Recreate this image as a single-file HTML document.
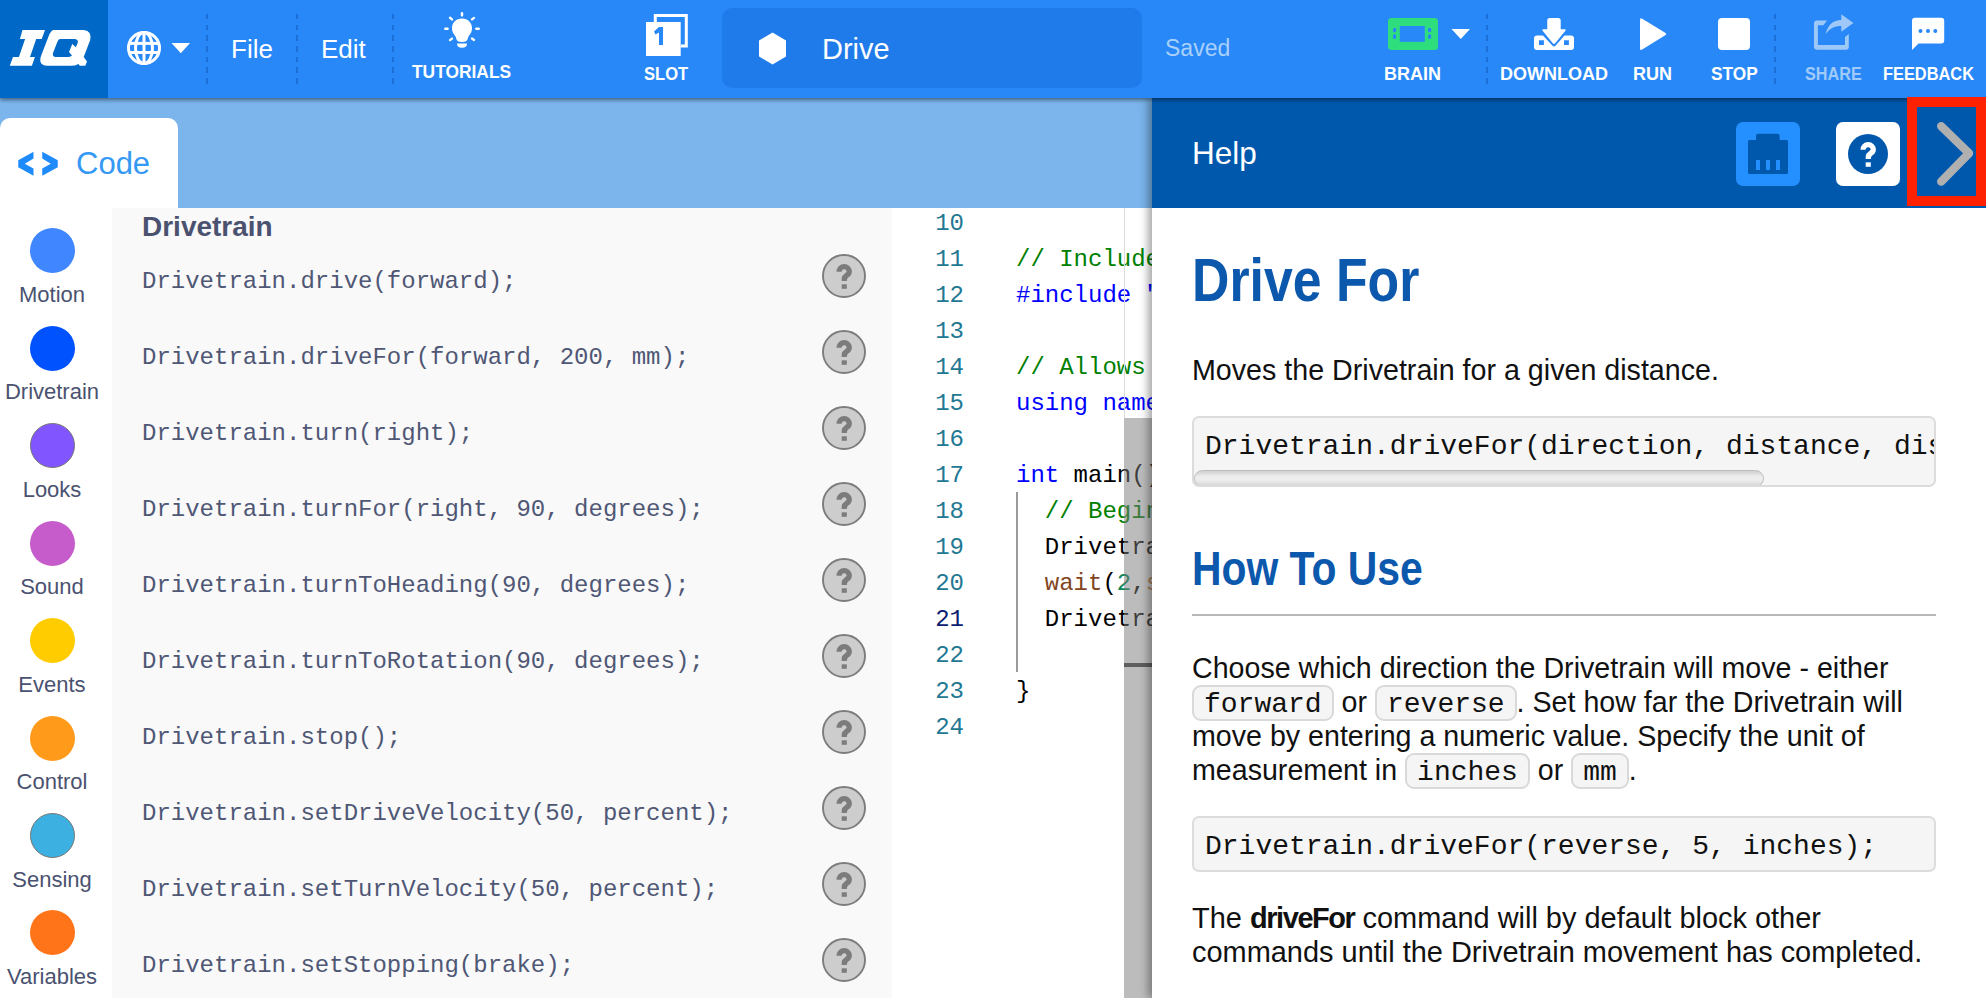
<!DOCTYPE html>
<html><head><meta charset="utf-8">
<style>
*{box-sizing:border-box;margin:0;padding:0}
html,body{width:1986px;height:998px;overflow:hidden;background:#fff;font-family:"Liberation Sans",sans-serif}
.abs{position:absolute}
#hdr{left:0;top:0;width:1986px;height:98px;background:#2888f8;z-index:5;box-shadow:0 2px 4px rgba(0,0,0,0.45)}
#logo{left:0;top:0;width:108px;height:98px;background:#0069c7}
.sep{top:14px;height:70px;width:2px;background:repeating-linear-gradient(to bottom,#1b6fd9 0,#1b6fd9 5.5px,transparent 5.5px,transparent 10.67px)}
.menu{color:#fff;font-size:26px;white-space:nowrap}
.lbl{color:#fff;font-size:18px;font-weight:700;white-space:nowrap;transform-origin:0 0}
#sub{left:0;top:98px;width:1152px;height:110px;background:#7bb5ec}
#tab{left:0;top:118px;width:178px;height:90px;background:#fff;border-radius:10px 10px 0 0}
#side{left:0;top:208px;width:112px;height:790px;background:#fff}
.cat{width:45px;height:45px;border-radius:50%;left:29.5px}
.catl{width:104px;left:0;text-align:center;color:#4a5270;font-size:22px;white-space:nowrap}
#panel{left:112px;top:208px;width:780px;height:790px;background:#f9f9fa}
.cl{left:142px;font-family:"Liberation Mono",monospace;font-size:24px;color:#4f5775;white-space:pre}
.q{width:44px;height:44px}.q svg{display:block}
#editor{left:892px;top:208px;width:260px;height:790px;background:#fff;overflow:hidden}
.ln{left:0;width:72px;text-align:right;font-family:"Liberation Mono",monospace;font-size:24px;color:#237893;white-space:pre}
.cd{font-family:"Liberation Mono",monospace;font-size:24px;color:#000;white-space:pre}
#help{left:1152px;top:98px;width:834px;height:900px;background:#fff;box-shadow:-4px 0 8px rgba(0,0,0,0.35);z-index:3}
#hh{left:0;top:0;width:834px;height:110px;background:#0058ad}
.ht{color:#0b58ad;font-weight:700;white-space:nowrap;transform-origin:0 0}
.p{left:40px;width:760px;font-size:28.62px;line-height:34px;color:#111}
.ic{display:inline-block;font-family:"Liberation Mono",monospace;font-size:28px;line-height:29px;padding:3px 10px 0;background:#f5f5f5;border:2px solid #d9d9d9;border-radius:9px;vertical-align:0}
.cb{left:40px;width:744px;background:#f5f5f5;border:2px solid #dcdcdc;border-radius:7px;overflow:hidden;font-family:"Liberation Mono",monospace;font-size:28px;color:#111;white-space:pre}
</style></head><body>

<div id="sub" class="abs"></div>
<div id="tab" class="abs">
 <svg class="abs" style="left:0;top:0" width="70" height="70" viewBox="0 118 70 70">
  <path fill="#1f8bfa" d="M33.5 151.75 L33.5 158.5 L24.75 163.75 L33.5 168.5 L33.5 175.75 L18.25 167.25 L18.25 160.25 Z"/>
  <path fill="#1f8bfa" d="M42.25 151.75 L42.25 158.5 L50.75 163.75 L42.25 168.5 L42.25 175.75 L57.75 167.25 L57.75 160.25 Z"/>
 </svg>
 <div class="abs" style="left:76px;top:28px;font-size:31px;color:#3399f4;white-space:nowrap">Code</div>
</div>
<div id="side" class="abs">
 <div class="abs cat" style="top:20.2px;background:#3f86ff;"></div>
 <div class="abs catl" style="top:73.7px">Motion</div>
 <div class="abs cat" style="top:117.7px;background:#0052ff;"></div>
 <div class="abs catl" style="top:171.2px">Drivetrain</div>
 <div class="abs cat" style="top:215.1px;background:#8155ff;border:1px solid #777;"></div>
 <div class="abs catl" style="top:268.6px">Looks</div>
 <div class="abs cat" style="top:312.6px;background:#c65bcb;"></div>
 <div class="abs catl" style="top:366.1px">Sound</div>
 <div class="abs cat" style="top:410.0px;background:#ffcc00;"></div>
 <div class="abs catl" style="top:463.5px">Events</div>
 <div class="abs cat" style="top:507.5px;background:#ff9a1a;"></div>
 <div class="abs catl" style="top:561.0px">Control</div>
 <div class="abs cat" style="top:605.0px;background:#3cb0e0;border:1px solid #777;"></div>
 <div class="abs catl" style="top:658.5px">Sensing</div>
 <div class="abs cat" style="top:702.4px;background:#ff7418;"></div>
 <div class="abs catl" style="top:755.9px">Variables</div>
</div>
</div>
<div id="panel" class="abs">
 <div class="abs" style="left:30px;top:3px;font-size:28px;font-weight:700;color:#4a5270;white-space:nowrap">Drivetrain</div>
 <div class="abs cl" style="left:30px;top:60px">Drivetrain.drive(forward);</div>
 <div class="abs q" style="left:710px;top:46px"><svg width="44" height="44" viewBox="0 0 44 44"><circle cx="22" cy="22" r="21" fill="#cdcdcd" stroke="#7c7c7c" stroke-width="1.9"/><path fill="#7c7c7c" d="M14.5 17.8 A7.7 7.7 0 0 1 29.9 17.7 Q29.9 21 26.5 23.3 Q24.8 24.5 24.8 26.9 L19.7 26.9 L19.7 24.2 Q19.9 21.5 22.8 19.5 Q24.7 18.3 24.7 17.2 A2.6 2.6 0 0 0 19.6 17.8 Z"/><rect x="19.7" y="30.3" width="5.1" height="4.5" fill="#7c7c7c"/></svg></div>
 <div class="abs cl" style="left:30px;top:136px">Drivetrain.driveFor(forward, 200, mm);</div>
 <div class="abs q" style="left:710px;top:122px"><svg width="44" height="44" viewBox="0 0 44 44"><circle cx="22" cy="22" r="21" fill="#cdcdcd" stroke="#7c7c7c" stroke-width="1.9"/><path fill="#7c7c7c" d="M14.5 17.8 A7.7 7.7 0 0 1 29.9 17.7 Q29.9 21 26.5 23.3 Q24.8 24.5 24.8 26.9 L19.7 26.9 L19.7 24.2 Q19.9 21.5 22.8 19.5 Q24.7 18.3 24.7 17.2 A2.6 2.6 0 0 0 19.6 17.8 Z"/><rect x="19.7" y="30.3" width="5.1" height="4.5" fill="#7c7c7c"/></svg></div>
 <div class="abs cl" style="left:30px;top:212px">Drivetrain.turn(right);</div>
 <div class="abs q" style="left:710px;top:198px"><svg width="44" height="44" viewBox="0 0 44 44"><circle cx="22" cy="22" r="21" fill="#cdcdcd" stroke="#7c7c7c" stroke-width="1.9"/><path fill="#7c7c7c" d="M14.5 17.8 A7.7 7.7 0 0 1 29.9 17.7 Q29.9 21 26.5 23.3 Q24.8 24.5 24.8 26.9 L19.7 26.9 L19.7 24.2 Q19.9 21.5 22.8 19.5 Q24.7 18.3 24.7 17.2 A2.6 2.6 0 0 0 19.6 17.8 Z"/><rect x="19.7" y="30.3" width="5.1" height="4.5" fill="#7c7c7c"/></svg></div>
 <div class="abs cl" style="left:30px;top:288px">Drivetrain.turnFor(right, 90, degrees);</div>
 <div class="abs q" style="left:710px;top:274px"><svg width="44" height="44" viewBox="0 0 44 44"><circle cx="22" cy="22" r="21" fill="#cdcdcd" stroke="#7c7c7c" stroke-width="1.9"/><path fill="#7c7c7c" d="M14.5 17.8 A7.7 7.7 0 0 1 29.9 17.7 Q29.9 21 26.5 23.3 Q24.8 24.5 24.8 26.9 L19.7 26.9 L19.7 24.2 Q19.9 21.5 22.8 19.5 Q24.7 18.3 24.7 17.2 A2.6 2.6 0 0 0 19.6 17.8 Z"/><rect x="19.7" y="30.3" width="5.1" height="4.5" fill="#7c7c7c"/></svg></div>
 <div class="abs cl" style="left:30px;top:364px">Drivetrain.turnToHeading(90, degrees);</div>
 <div class="abs q" style="left:710px;top:350px"><svg width="44" height="44" viewBox="0 0 44 44"><circle cx="22" cy="22" r="21" fill="#cdcdcd" stroke="#7c7c7c" stroke-width="1.9"/><path fill="#7c7c7c" d="M14.5 17.8 A7.7 7.7 0 0 1 29.9 17.7 Q29.9 21 26.5 23.3 Q24.8 24.5 24.8 26.9 L19.7 26.9 L19.7 24.2 Q19.9 21.5 22.8 19.5 Q24.7 18.3 24.7 17.2 A2.6 2.6 0 0 0 19.6 17.8 Z"/><rect x="19.7" y="30.3" width="5.1" height="4.5" fill="#7c7c7c"/></svg></div>
 <div class="abs cl" style="left:30px;top:440px">Drivetrain.turnToRotation(90, degrees);</div>
 <div class="abs q" style="left:710px;top:426px"><svg width="44" height="44" viewBox="0 0 44 44"><circle cx="22" cy="22" r="21" fill="#cdcdcd" stroke="#7c7c7c" stroke-width="1.9"/><path fill="#7c7c7c" d="M14.5 17.8 A7.7 7.7 0 0 1 29.9 17.7 Q29.9 21 26.5 23.3 Q24.8 24.5 24.8 26.9 L19.7 26.9 L19.7 24.2 Q19.9 21.5 22.8 19.5 Q24.7 18.3 24.7 17.2 A2.6 2.6 0 0 0 19.6 17.8 Z"/><rect x="19.7" y="30.3" width="5.1" height="4.5" fill="#7c7c7c"/></svg></div>
 <div class="abs cl" style="left:30px;top:516px">Drivetrain.stop();</div>
 <div class="abs q" style="left:710px;top:502px"><svg width="44" height="44" viewBox="0 0 44 44"><circle cx="22" cy="22" r="21" fill="#cdcdcd" stroke="#7c7c7c" stroke-width="1.9"/><path fill="#7c7c7c" d="M14.5 17.8 A7.7 7.7 0 0 1 29.9 17.7 Q29.9 21 26.5 23.3 Q24.8 24.5 24.8 26.9 L19.7 26.9 L19.7 24.2 Q19.9 21.5 22.8 19.5 Q24.7 18.3 24.7 17.2 A2.6 2.6 0 0 0 19.6 17.8 Z"/><rect x="19.7" y="30.3" width="5.1" height="4.5" fill="#7c7c7c"/></svg></div>
 <div class="abs cl" style="left:30px;top:592px">Drivetrain.setDriveVelocity(50, percent);</div>
 <div class="abs q" style="left:710px;top:578px"><svg width="44" height="44" viewBox="0 0 44 44"><circle cx="22" cy="22" r="21" fill="#cdcdcd" stroke="#7c7c7c" stroke-width="1.9"/><path fill="#7c7c7c" d="M14.5 17.8 A7.7 7.7 0 0 1 29.9 17.7 Q29.9 21 26.5 23.3 Q24.8 24.5 24.8 26.9 L19.7 26.9 L19.7 24.2 Q19.9 21.5 22.8 19.5 Q24.7 18.3 24.7 17.2 A2.6 2.6 0 0 0 19.6 17.8 Z"/><rect x="19.7" y="30.3" width="5.1" height="4.5" fill="#7c7c7c"/></svg></div>
 <div class="abs cl" style="left:30px;top:668px">Drivetrain.setTurnVelocity(50, percent);</div>
 <div class="abs q" style="left:710px;top:654px"><svg width="44" height="44" viewBox="0 0 44 44"><circle cx="22" cy="22" r="21" fill="#cdcdcd" stroke="#7c7c7c" stroke-width="1.9"/><path fill="#7c7c7c" d="M14.5 17.8 A7.7 7.7 0 0 1 29.9 17.7 Q29.9 21 26.5 23.3 Q24.8 24.5 24.8 26.9 L19.7 26.9 L19.7 24.2 Q19.9 21.5 22.8 19.5 Q24.7 18.3 24.7 17.2 A2.6 2.6 0 0 0 19.6 17.8 Z"/><rect x="19.7" y="30.3" width="5.1" height="4.5" fill="#7c7c7c"/></svg></div>
 <div class="abs cl" style="left:30px;top:744px">Drivetrain.setStopping(brake);</div>
 <div class="abs q" style="left:710px;top:730px"><svg width="44" height="44" viewBox="0 0 44 44"><circle cx="22" cy="22" r="21" fill="#cdcdcd" stroke="#7c7c7c" stroke-width="1.9"/><path fill="#7c7c7c" d="M14.5 17.8 A7.7 7.7 0 0 1 29.9 17.7 Q29.9 21 26.5 23.3 Q24.8 24.5 24.8 26.9 L19.7 26.9 L19.7 24.2 Q19.9 21.5 22.8 19.5 Q24.7 18.3 24.7 17.2 A2.6 2.6 0 0 0 19.6 17.8 Z"/><rect x="19.7" y="30.3" width="5.1" height="4.5" fill="#7c7c7c"/></svg></div>
</div>
<div id="editor" class="abs">
 <div class="abs ln" style="top:2px;color:#237893">10</div>
 <div class="abs ln" style="top:38px;color:#237893">11</div>
 <div class="abs cd" style="left:124px;top:38px"><span style="color:#008000">// Include the IQ Library</span></div>
 <div class="abs ln" style="top:74px;color:#237893">12</div>
 <div class="abs cd" style="left:124px;top:74px"><span style="color:#0000ff">#include "iq_cpp.h"</span></div>
 <div class="abs ln" style="top:110px;color:#237893">13</div>
 <div class="abs ln" style="top:146px;color:#237893">14</div>
 <div class="abs cd" style="left:124px;top:146px"><span style="color:#008000">// Allows for easier use of the VEX Library</span></div>
 <div class="abs ln" style="top:182px;color:#237893">15</div>
 <div class="abs cd" style="left:124px;top:182px"><span style="color:#0000ff">using namespace</span> vex;</div>
 <div class="abs ln" style="top:218px;color:#237893">16</div>
 <div class="abs ln" style="top:254px;color:#237893">17</div>
 <div class="abs cd" style="left:124px;top:254px"><span style="color:#0000ff">int</span> main() {</div>
 <div class="abs ln" style="top:290px;color:#237893">18</div>
 <div class="abs cd" style="left:124px;top:290px">  <span style="color:#008000">// Begin project code</span></div>
 <div class="abs ln" style="top:326px;color:#237893">19</div>
 <div class="abs cd" style="left:124px;top:326px">  Drivetrain.driveFor(forward, 200, mm);</div>
 <div class="abs ln" style="top:362px;color:#237893">20</div>
 <div class="abs cd" style="left:124px;top:362px">  <span style="color:#83461f">wait</span>(<span style="color:#098658">2</span>,<span style="color:#d07a2a">seconds</span>);</div>
 <div class="abs ln" style="top:398px;color:#0b216f">21</div>
 <div class="abs cd" style="left:124px;top:398px">  Drivetrain.turnFor(right, 90, degrees);</div>
 <div class="abs ln" style="top:434px;color:#237893">22</div>
 <div class="abs ln" style="top:470px;color:#237893">23</div>
 <div class="abs cd" style="left:124px;top:470px">}</div>
 <div class="abs ln" style="top:506px;color:#237893">24</div>
 <div class="abs" style="left:124px;top:284px;width:2px;height:180px;background:#9a9a9a"></div>
 <div class="abs" style="left:232px;top:0;width:1px;height:210px;background:#dcdcdc"></div>
 <div class="abs" style="left:232px;top:210px;width:28px;height:580px;background:rgba(121,121,121,0.5)"></div>
 <div class="abs" style="left:232px;top:455px;width:28px;height:4px;background:#5e5e5e"></div>
</div>
<div id="help" class="abs">
 <div id="hh" class="abs">
  <div class="abs" style="left:40px;top:37px;font-size:31.5px;color:#fff;white-space:nowrap">Help</div>
  <div class="abs" style="left:584px;top:24px;width:64px;height:64px;background:#2490ff;border-radius:7px">
   <svg class="abs" style="left:0;top:0" width="64" height="64" viewBox="0 0 64 64">
    <path fill="#0058ad" d="M22 11.8 L41.6 11.8 Q43.6 11.8 43.6 13.8 L43.6 18 L50.5 18 Q52 18 52 19.5 L52 50.5 Q52 52 50.5 52 L13.5 52 Q12 52 12 50.5 L12 19.5 Q12 18 13.5 18 L20 18 L20 13.8 Q20 11.8 22 11.8 Z"/>
    <rect x="20" y="38" width="4" height="10" fill="#2490ff"/><rect x="30" y="38" width="4" height="10" fill="#2490ff"/><rect x="40" y="38" width="4" height="10" fill="#2490ff"/>
   </svg>
  </div>
  <div class="abs" style="left:684px;top:24px;width:64px;height:64px;background:#fff;border-radius:7px">
   <svg class="abs" style="left:0;top:0" width="64" height="64" viewBox="0 0 64 64">
    <circle cx="32" cy="32" r="20" fill="#0058ad"/>
    <g transform="translate(10,10)"><path fill="#fff" d="M14.5 17.8 A7.7 7.7 0 0 1 29.9 17.7 Q29.9 21 26.5 23.3 Q24.8 24.5 24.8 26.9 L19.7 26.9 L19.7 24.2 Q19.9 21.5 22.8 19.5 Q24.7 18.3 24.7 17.2 A2.6 2.6 0 0 0 19.6 17.8 Z"/><rect x="19.7" y="30.3" width="5.1" height="4.5" fill="#fff"/></g>
   </svg>
  </div>
  <svg class="abs" style="left:780px;top:20px" width="46" height="70" viewBox="0 0 46 70">
   <path d="M9.2 8.3 L37 35.3 L9.2 63.6" fill="none" stroke="#b0b0b0" stroke-width="8.4" stroke-linecap="round" stroke-linejoin="round"/>
  </svg>
 </div>
 <div class="abs ht" style="left:40px;top:146px;font-size:61.5px;transform:scaleX(0.842)">Drive For</div>
 <div class="abs p" style="top:255px;font-size:28.65px">Moves the Drivetrain for a given distance.</div>
 <div class="abs cb" style="top:318px;height:71px">
  <div class="abs" style="left:11px;top:13px">Drivetrain.driveFor(direction, distance, distanceUnits);</div>
  <div class="abs" style="left:0px;top:52px;width:570px;height:17px;border-radius:9px;background:linear-gradient(#d0d0d0,#ececec 35%,#eeeeee 60%,#d4d4d4);border:1px solid #bdbdbd"></div>
 </div>
 <div class="abs ht" style="left:40px;top:443px;font-size:47.5px;transform:scaleX(0.86)">How To Use</div>
 <div class="abs" style="left:40px;top:516px;width:744px;height:2px;background:#b8b8b8"></div>
 <div class="abs p" style="top:553px">Choose which direction the Drivetrain will move - either</div>
 <div class="abs p" style="top:587px"><span class="ic">forward</span> or <span class="ic">reverse</span>. Set how far the Drivetrain will</div>
 <div class="abs p" style="top:621px">move by entering a numeric value. Specify the unit of</div>
 <div class="abs p" style="top:655px">measurement in <span class="ic">inches</span> or <span class="ic">mm</span>.</div>
 <div class="abs cb" style="top:718px;height:56px">
  <div class="abs" style="left:11px;top:13px">Drivetrain.driveFor(reverse, 5, inches);</div>
 </div>
 <div class="abs p" style="top:803px;font-size:28.95px">The <b style="letter-spacing:-1.4px">driveFor</b> command will by default block other</div>
 <div class="abs p" style="top:837px;font-size:28.95px">commands until the Drivetrain movement has completed.</div>
</div>
<div id="hdr" class="abs">
 <div id="logo" class="abs">
  <svg width="108" height="98" viewBox="0 0 108 98" class="abs" style="left:0;top:0">
   <path fill="#fff" d="M22.5 30 L45 30 L41.7 39.1 L36.2 39.1 L30 57 L34.9 57 L31.9 65.8 L9.8 65.8 L13 57 L18.9 57 L25.1 39.1 L19.9 39.1 Z"/>
   <path fill="#fff" fill-rule="evenodd" d="M53 30 L84 30 Q92 31 90.2 40 L83.7 57 L87 61.6 L85.3 65.8 L79.8 65.8 L78.5 63.9 Q75 65.8 71 65.8 L47 65.8 Q38 65 41 56 L49.5 34 Q51.5 30.5 53 30 Z
     M60 39.1 L75 39.1 Q78.5 39.8 77.8 42.4 L75.9 47.2 L72.3 44 L69 52.1 L72 55.4 Q70 57 68 57 L56 57 Q52 57 53 53 L57.3 42 Q58.5 39.3 60 39.1 Z"/>
  </svg>
 </div>
 <svg class="abs" style="left:125px;top:29px" width="40" height="40" viewBox="0 0 40 40">
  <g fill="none" stroke="#fff" stroke-width="3">
   <circle cx="19" cy="19" r="15.5"/>
   <ellipse cx="19" cy="19" rx="8.5" ry="15.5"/>
   <line x1="19" y1="3.5" x2="19" y2="34.5"/>
   <line x1="4" y1="14.4" x2="34" y2="14.4"/>
   <line x1="4" y1="23.5" x2="34" y2="23.5"/>
  </g>
 </svg>
 <svg class="abs" style="left:171px;top:43px" width="20" height="11" viewBox="0 0 20 11"><path d="M0.5 0 L19 0 L9.8 10.2 Z" fill="#fff"/></svg>
 <div class="abs sep" style="left:206px"></div>
 <div class="abs sep" style="left:296px"></div>
 <div class="abs sep" style="left:392px"></div>
 <div class="abs sep" style="left:1486px"></div>
 <div class="abs sep" style="left:1774px"></div>
 <div class="abs menu" style="left:231px;top:34px">File</div>
 <div class="abs menu" style="left:321px;top:34px">Edit</div>
 <svg class="abs" style="left:440px;top:8px" width="44" height="44" viewBox="0 0 44 44">
  <g stroke="#fff" stroke-width="2.4" stroke-linecap="round">
   <line x1="22" y1="5.3" x2="22" y2="7.4"/>
   <line x1="5.3" y1="20.8" x2="7.6" y2="20.8"/>
   <line x1="36.3" y1="20.8" x2="38.7" y2="20.8"/>
   <line x1="10" y1="9.8" x2="12" y2="11.4"/>
   <line x1="34" y1="9.9" x2="32" y2="11.4"/>
   <line x1="10" y1="32.1" x2="12" y2="30.6"/>
   <line x1="34" y1="31.9" x2="32" y2="30.6"/>
  </g>
  <path fill="#fff" d="M22 10.5 C27.8 10.5 32 14.6 32 20.3 C32 23.6 30.7 25.7 29 27.7 C28.4 28.4 28 29.3 27.8 30.5 Q27.2 34 22 34 Q16.8 34 16.2 30.5 C16 29.3 15.6 28.4 15 27.7 C13.3 25.7 12 23.6 12 20.3 C12 14.6 16.2 10.5 22 10.5 Z"/>
  <path fill="#fff" d="M17 35.5 L27 35.5 Q27 39.8 22 39.8 Q17 39.8 17 35.5 Z"/>
 </svg>
 <div class="abs lbl" style="left:412px;top:62px;transform:scaleX(0.965)">TUTORIALS</div>
 <svg class="abs" style="left:644px;top:12px" width="48" height="48" viewBox="0 0 48 48">
  <rect x="11.3" y="3.5" width="31" height="30.5" fill="none" stroke="#fff" stroke-width="3"/>
  <rect x="2" y="10" width="34.7" height="34" fill="#2888f8"/>
  <rect x="2" y="10" width="34.7" height="34" fill="#fff"/>
  <path fill="#2888f8" d="M15 15 L19 15 L19 33 L15 33 L15 20.6 L11.4 22.4 L10 19.6 Z"/>
 </svg>
 <div class="abs lbl" style="left:644px;top:64px;transform:scaleX(0.92)">SLOT</div>
 <div class="abs" style="left:722px;top:8px;width:420px;height:80px;background:#1f7be9;border-radius:10px"></div>
 <svg class="abs" style="left:757.5px;top:31.7px" width="30" height="34" viewBox="0 0 30 34"><path fill="#fff" d="M14.5 0.5 L28 8.5 L28 24.5 L14.5 32.5 L1 24.5 L1 8.5 Z"/></svg>
 <div class="abs menu" style="left:821.5px;top:32px;font-size:30px;transform:scaleX(0.965);transform-origin:0 0">Drive</div>
 <div class="abs menu" style="left:1165px;top:35px;font-size:23px;color:#a9d0fa">Saved</div>
 <svg class="abs" style="left:1386px;top:16px" width="54" height="36" viewBox="0 0 54 36">
  <rect x="2" y="2" width="50" height="32" rx="3.5" fill="#2ede7c"/>
  <rect x="13.8" y="10" width="25" height="15.8" fill="#2888f8"/>
  <rect x="7" y="11.7" width="3.2" height="4.6" rx="1.5" fill="#2888f8"/>
  <rect x="7" y="18.3" width="3.2" height="4.6" rx="1.5" fill="#2888f8"/>
  <rect x="42" y="11.7" width="3.2" height="4.6" rx="1.5" fill="#2888f8"/>
  <rect x="42" y="18.3" width="3.2" height="4.6" rx="1.5" fill="#2888f8"/>
 </svg>
 <svg class="abs" style="left:1451px;top:28px" width="20" height="12" viewBox="0 0 20 12"><path d="M0.5 1 L19 1 L9.8 11 Z" fill="#fff"/></svg>
 <div class="abs lbl" style="left:1384px;top:64px">BRAIN</div>
 <svg class="abs" style="left:1530px;top:14px" width="48" height="40" viewBox="0 0 48 40">
  <path fill="#fff" d="M17.25 6.4 Q17.25 3.9 19.75 3.9 L28.2 3.9 Q30.7 3.9 30.7 6.4 L30.7 15.3 L35 15.3 Q36.2 15.5 35.6 16.4 L25.2 29.3 Q24 30.5 22.8 29.3 L12.4 16.4 Q11.8 15.5 13 15.3 L17.25 15.3 Z"/>
  <path fill="#fff" fill-rule="evenodd" d="M7 21.4 L13 21.4 L22.5 31.8 Q24 33.2 25.5 31.8 L34.5 21.4 L41 21.4 Q44 21.4 44 24.4 L44 32.9 Q44 35.9 41 35.9 L7 35.9 Q4 35.9 4 32.9 L4 24.4 Q4 21.4 7 21.4 Z M9 26.2 L9 31 L13.9 31 L13.9 26.2 Z M34 26.2 L34 31 L38.9 31 L38.9 26.2 Z"/>
 </svg>
 <div class="abs lbl" style="left:1500px;top:64px">DOWNLOAD</div>
 <svg class="abs" style="left:1636px;top:14px" width="34" height="40" viewBox="0 0 34 40"><path fill="#fff" d="M4 5.9 Q4 3.5 6.2 4.8 L29.2 18.7 Q31.2 20 29.2 21.3 L6.2 35.5 Q4 36.8 4 34.4 Z"/></svg>
 <div class="abs lbl" style="left:1633px;top:64px">RUN</div>
 <div class="abs" style="left:1718px;top:18px;width:32px;height:32px;background:#fff;border-radius:4px"></div>
 <div class="abs lbl" style="left:1711px;top:64px;transform:scaleX(0.96)">STOP</div>
 <svg class="abs" style="left:1810px;top:10px" width="48" height="44" viewBox="0 0 48 44">
  <g fill="#9dc8f8">
   <path d="M7 10.4 L17 10.4 L13.4 15.2 L7.9 15.2 L7.9 35 L35 35 L35 27.1 L38.8 24 L38.8 36.7 Q38.8 39.7 35.8 39.7 L7 39.7 Q4 39.7 4 36.7 L4 13.4 Q4 10.4 7 10.4 Z"/>
   <path d="M15.7 24.3 C17.5 15 23 9.9 31.3 9.9 L31.3 4.2 L43.4 13 L31.3 21.8 L31.3 16.1 C24.5 16.1 19.5 18.5 15.7 24.3 Z"/>
  </g>
 </svg>
 <div class="abs lbl" style="left:1805px;top:64px;color:#9fcaf9;transform:scaleX(0.9)">SHARE</div>
 <svg class="abs" style="left:1908px;top:14px" width="40" height="40" viewBox="0 0 40 40">
  <path fill="#fff" d="M7 3.8 L33.2 3.8 Q36.2 3.8 36.2 6.8 L36.2 26.5 Q36.2 29.5 33.2 29.5 L10.5 29.5 L4 36 L4 6.8 Q4 3.8 7 3.8 Z"/>
  <circle cx="12.5" cy="16.9" r="2" fill="#2888f8"/><circle cx="20" cy="16.9" r="2" fill="#2888f8"/><circle cx="27.3" cy="16.9" r="2" fill="#2888f8"/>
 </svg>
 <div class="abs lbl" style="left:1883px;top:64px;transform:scaleX(0.91)">FEEDBACK</div>
</div>
<div class="abs" style="left:1907px;top:97px;width:79px;height:109px;border:10px solid #ff2200;z-index:10"></div>
</body></html>
